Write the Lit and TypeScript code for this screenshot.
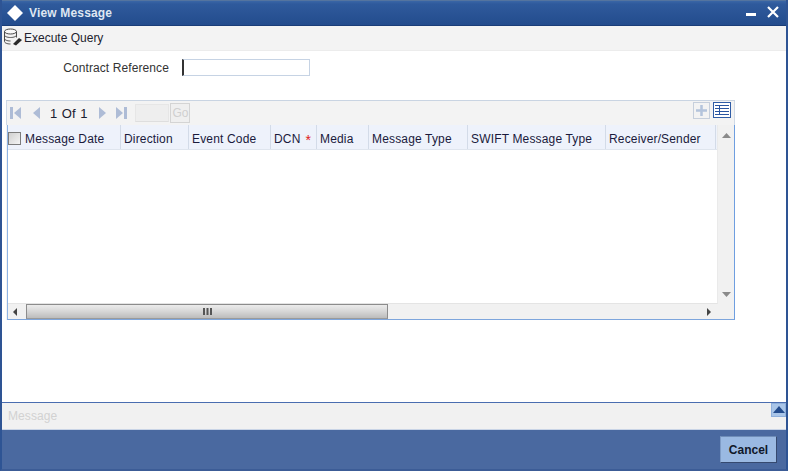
import { LitElement, html, css } from "lit";
import { customElement } from "lit/decorators.js";

@customElement("app-root")
export class AppRoot extends LitElement {
  static styles = css`
    :host { display: block; width: 788px; height: 471px; font-family: "Liberation Sans", Arial, sans-serif; font-size: 12px; color: #1a1a2a; }
    .win { width: 788px; height: 471px; box-sizing: border-box; display: flex; flex-direction: column; background: #4a69a0; border-left: 2px solid #2e5494; border-right: 2px solid #2e5494; border-bottom: 2px solid #3c5c96; overflow: hidden; }
    .title { flex: none; display: flex; align-items: center; margin: 0 -2px; padding: 0 9px 0 6px; background: linear-gradient(#3a66a6 0, #2f5a9c 3px, #234c8d 100%); border-top: 1px solid #54749f; border-bottom: 1px solid #1a3d78; box-sizing: border-box; height: 26px; color: #fff; font-weight: bold; gap: 5px; }
    .title .t { flex: 1; color: #dfe7f2; letter-spacing: 0.17px; }
    .wc { display: flex; align-items: center; gap: 11px; margin-top: -3px; }
    .tools { height: 25px; flex: none; display: flex; align-items: center; background: #f3f3f3; border-bottom: 1px solid #ececec; gap: 1px; padding-left: 1px; box-sizing: border-box; color: #22222e; }
    .main { flex: 1; background: #fff; display: flex; flex-direction: column; padding: 0 0 0 4px; min-height: 0; }
    .field { display: flex; height: 49px; flex: none; padding-top: 8px; box-sizing: border-box; }
    .field label { width: 163px; text-align: right; color: #333; height: 17px; line-height: 19px; letter-spacing: 0.1px; white-space: nowrap; }
    .input { margin-left: 13px; width: 128px; height: 17px; box-sizing: border-box; border: 1px solid #c6d3e4; border-left: 2px solid #333; background: #fff; }
    .panel { width: 729px; height: 220px; box-sizing: border-box; border-top: 1px solid #c9d4e2; background: #f3f3f3; display: flex; flex-direction: column; }
    .pbar { height: 24px; flex: none; display: flex; align-items: center; padding-left: 3px; box-sizing: border-box; border-left: 1px solid #cfd9e6; border-right: 1px solid #cfd9e6; }
    .pbar svg { display: block; flex: none; }
    .pager { color: #1a2030; font-size: 13px; margin: 0 9px 0 7px; word-spacing: 1px; }
    .goin { width: 34px; height: 18px; background: #eeeeee; border: 1px solid #e6e6e6; border-bottom-color: #dedede; box-sizing: border-box; margin-left: 7px; }
    .go { width: 20px; height: 20px; margin-left: 1px; box-sizing: border-box; border: 1px solid #d4d4d4; background: #efefef; color: #d0d0d0; text-align: center; line-height: 18px; font-size: 12px; }
    .spacer { flex: 1; }
    .plus { width: 17px; height: 17px; border: 1px solid #c6cfdc; box-sizing: border-box; display: flex; align-items: center; justify-content: center; margin: -6px 3px 0 0; }
    .view { width: 18px; height: 16px; border: 1px solid #2f5ca6; box-sizing: border-box; background: #fff; margin: -6px 3px 0 0; display: flex; align-items: center; justify-content: center; }
    .gridwrap { flex: 1; display: grid; grid-template-columns: 710px 1fr; grid-template-rows: 1fr 15px; border-left: 1px solid #8fb4e4; border-right: 1px solid #6e9ee0; border-bottom: 1px solid #7da5dc; margin-left: 1px; min-height: 0; }
    .table { background: #fff; display: flex; flex-direction: column; border-right: 1px solid #eaeaea; border-bottom: 1px solid #e4e4e4; min-width: 0; }
    .head { display: grid; grid-template-columns: 14px 99px 68px 82px 46px 52px 99px 138px 110px; height: 25px; background: #eef2fb; border-bottom: 1px solid #dfe5ee; box-sizing: border-box; flex: none; }
    .head > div { display: flex; align-items: center; padding: 3px 0 0 3px; box-sizing: border-box; border-right: 1px solid #d3dbe8; white-space: nowrap; color: #1a1a3c; letter-spacing: 0.16px; }
    .head > .ck { padding: 3px 0 0 0; border-right: 0; }
    .box { width: 13px; height: 13px; box-sizing: border-box; border: 1px solid #7c7c7c; background: linear-gradient(135deg, #d0d0d0, #f4f4f4); }
    .star { color: #e02020; margin: 3px 0 0 5px; font-size: 14px; }
    .vbar { background: #f1f1f1; display: flex; flex-direction: column; align-items: center; justify-content: space-between; padding: 8px 0 7px; box-sizing: border-box; }
    .hbar { background: #f1f1f1; display: flex; align-items: center; padding-left: 5px; box-sizing: border-box; }
    .thumb { margin-left: 9px; width: 362px; height: 15px; box-sizing: border-box; border: 1px solid #8c8c8c; border-bottom-color: #9a9a9a; background: linear-gradient(#ececec, #d6d6d6 50%, #bcbcbc); display: flex; align-items: center; justify-content: center; }
    .rarrow { margin-left: auto; margin-right: 7px; }
    .corner { background: #f1f1f1; }
    .gap { flex: 1; }
    .msg { height: 27px; flex: none; margin-left: -4px; background: #f1f1f1; border-top: 1px solid #4a6db0; display: flex; justify-content: space-between; color: #d2d2d2; padding: 0 0 0 6px; box-sizing: border-box; letter-spacing: 0.1px; }
    .msg span { line-height: 26px; }
    .msgb { width: 15px; height: 14px; background: #a9c5e8; border: 1px solid #8fb0dc; box-sizing: border-box; display: flex; align-items: center; justify-content: center; }
    .foot { height: 40px; flex: none; display: flex; align-items: center; justify-content: flex-end; padding-right: 9px; border-top: 1px solid #c9d4e6; box-sizing: border-box; }
    .cancel { width: 57px; height: 27px; box-sizing: border-box; background: #9ab9e2; border: 1px solid #7f9cc6; border-right-color: #35496f; border-bottom-color: #35496f; border-top-color: #6f8db8; font-weight: bold; color: #10182a; display: flex; align-items: center; justify-content: center; font-size: 12px; }
  `;

  render() {
    const cols = ["Message Date", "Direction", "Event Code"];
    const cols2 = ["Media", "Message Type", "SWIFT Message Type", "Receiver/Sender"];
    return html`<div class="win">
      <div class="title">
        <svg width="18" height="18" viewBox="0 0 18 18"><path d="M9 1l8 8-8 8-8-8z" fill="#fff"/></svg>
        <span class="t">View Message</span>
        <span class="wc">
          <svg width="10" height="10" viewBox="0 0 10 10"><rect x="0" y="6" width="10" height="3" fill="#fff"/></svg>
          <svg width="12" height="12" viewBox="0 0 12 12"><path d="M1 1l10 10M11 1L1 11" stroke="#fff" stroke-width="2.2"/></svg>
        </span>
      </div>
      <div class="tools">
        <svg width="20" height="20" viewBox="0 0 20 20" fill="none" stroke="#4a4a4a"><ellipse cx="7.500" cy="3.500" rx="6" ry="2.500" fill="#fafafa"/><path d="M1.500 3.500v10c0 1.400 2.700 2.500 6 2.500M13.500 3.500v6M1.500 7c0 1.400 2.700 2.500 6 2.500s6-1.100 6-2.500M1.500 10.500c0 1.400 2.700 2.500 6 2.500"/><path d="M10 16l6-6 3 2-6 5.500z" fill="#2a2a2a" stroke="none"/></svg>
        <span>Execute Query</span>
      </div>
      <div class="main">
        <div class="field"><label>Contract Reference</label><div class="input"></div></div>
        <div class="panel">
          <div class="pbar">
            <svg width="13" height="14" viewBox="0 0 13 14" fill="#aebcd6"><rect x="0" y="1" width="3" height="12"/><path d="M11 1v12L4 7z"/></svg>
            <svg width="13" height="14" viewBox="0 0 13 14" fill="#aebcd6" style="margin-left:7px"><path d="M10 1v12L3 7z"/></svg>
            <span class="pager">1 Of 1</span>
            <svg width="13" height="14" viewBox="0 0 13 14" fill="#aebcd6"><path d="M3 1v12l7-6z"/></svg>
            <svg width="13" height="14" viewBox="0 0 13 14" fill="#aebcd6" style="margin-left:6px"><rect x="9" y="1" width="3" height="12"/><path d="M1 1v12l7-6z"/></svg>
            <div class="goin"></div>
            <div class="go">Go</div>
            <div class="spacer"></div>
            <div class="plus"><svg width="13" height="13" viewBox="0 0 13 13"><path d="M6.500 1v11M1 6.500h11" stroke="#b4c4dc" stroke-width="2.500"/></svg></div>
            <div class="view"><svg width="14" height="12" viewBox="0 0 14 12" fill="none" stroke="#2a55a0"><path d="M0 1.500h14M0 4.500h14M0 7.500h14M0 10.500h14M4.500 1v10"/></svg></div>
          </div>
          <div class="gridwrap">
            <div class="table">
              <div class="head">
                <div class="ck"><span class="box"></span></div>
                ${cols.map((c) => html`<div>${c}</div>`)}
                <div>DCN<span class="star">*</span></div>
                ${cols2.map((c) => html`<div>${c}</div>`)}
              </div>
            </div>
            <div class="vbar">
              <svg width="9" height="5" viewBox="0 0 9 5"><path d="M4.500 0L9 5H0z" fill="#8a8a8a"/></svg>
              <svg width="9" height="5" viewBox="0 0 9 5"><path d="M4.500 5L9 0H0z" fill="#8a8a8a"/></svg>
            </div>
            <div class="hbar">
              <svg width="4" height="8" viewBox="0 0 4 8"><path d="M0 4l4-4v8z" fill="#444"/></svg>
              <div class="thumb"><svg width="9" height="7" viewBox="0 0 9 7" fill="#555"><rect x="0" width="2" height="7"/><rect x="3.500" width="2" height="7"/><rect x="7" width="2" height="7"/></svg></div>
              <svg class="rarrow" width="4" height="8" viewBox="0 0 4 8"><path d="M4 4L0 0v8z" fill="#444"/></svg>
            </div>
            <div class="corner"></div>
          </div>
        </div>
        <div class="gap"></div>
        <div class="msg"><span>Message</span><div class="msgb"><svg width="12" height="8" viewBox="0 0 12 8"><path d="M6 0l6 7H0z" fill="#234c8d"/></svg></div></div>
      </div>
      <div class="foot"><div class="cancel">Cancel</div></div>
    </div>`;
  }
}
